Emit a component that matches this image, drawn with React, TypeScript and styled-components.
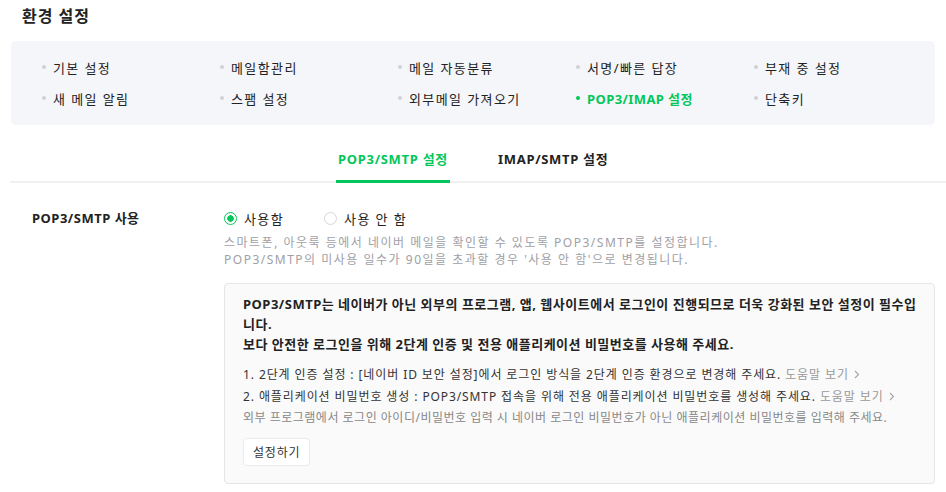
import React from "react";
import styled, { createGlobalStyle } from "styled-components";

const GlobalStyle = createGlobalStyle`
  html, body {
    margin: 0;
    padding: 0;
    background: #fff;
  }
  body {
    font-family: "Noto Sans", "Noto Sans CJK KR", sans-serif;
    color: #222;
    -webkit-font-smoothing: antialiased;
  }
`;

const menus = [
  ["기본 설정", "메일함관리", "메일 자동분류", "서명/빠른 답장", "부재 중 설정"],
  ["새 메일 알림", "스팸 설정", "외부메일 가져오기", "POP3/IMAP 설정", "단축키"],
];

const Chevron = () => (
  <svg width="6" height="9" viewBox="0 0 6 9" fill="none">
    <path d="M1 1l3.5 3.5L1 8" stroke="#a5a5a5" strokeWidth="1.1" />
  </svg>
);

function App() {
  return (
    <Page>
      <GlobalStyle />
      <Title>환경 설정</Title>
      <MenuBox>
        {menus.flat().map((m) => (
          <MenuItem key={m} $active={m === "POP3/IMAP 설정"}>
            {m}
          </MenuItem>
        ))}
      </MenuBox>

      <Tabs>
        <Tab $active>POP3/SMTP 설정</Tab>
        <Tab>IMAP/SMTP 설정</Tab>
      </Tabs>

      <Row>
        <Label>POP3/SMTP 사용</Label>
        <Content>
          <Radios>
            <RadioLabel>
              <Radio $checked />
              사용함
            </RadioLabel>
            <RadioLabel>
              <Radio />
              사용 안 함
            </RadioLabel>
          </Radios>
          <Desc>
            스마트폰, 아웃룩 등에서 네이버 메일을 확인할 수 있도록 POP3/SMTP를 설정합니다.
            <br />
            POP3/SMTP의 미사용 일수가 90일을 초과할 경우 '사용 안 함'으로 변경됩니다.
          </Desc>
          <InfoBox>
            <InfoTitle>
              POP3/SMTP는 네이버가 아닌 외부의 프로그램, 앱, 웹사이트에서 로그인이 진행되므로 더욱 강화된 보안 설정이 필수입니다.
              <br />
              보다 안전한 로그인을 위해 2단계 인증 및 전용 애플리케이션 비밀번호를 사용해 주세요.
            </InfoTitle>
            <Steps>
              <Step>
                1. 2단계 인증 설정 : [네이버 ID 보안 설정]에서 로그인 방식을 2단계 인증 환경으로 변경해 주세요.
                <HelpLink>
                  도움말 보기 <Chevron />
                </HelpLink>
              </Step>
              <Step>
                2. 애플리케이션 비밀번호 생성 : POP3/SMTP 접속을 위해 전용 애플리케이션 비밀번호를 생성해 주세요.
                <HelpLink>
                  도움말 보기 <Chevron />
                </HelpLink>
              </Step>
              <StepNote>
                외부 프로그램에서 로그인 아이디/비밀번호 입력 시 네이버 로그인 비밀번호가 아닌 애플리케이션 비밀번호를 입력해 주세요.
              </StepNote>
            </Steps>
            <SetupButton>설정하기</SetupButton>
          </InfoBox>
        </Content>
      </Row>
    </Page>
  );
}

const Page = styled.div`
  width: 946px;
  padding: 0 11px;
  box-sizing: border-box;
`;

const Title = styled.h1`
  margin: 0;
  padding: 5px 0 0 11px;
  height: 36px;
  font-size: 16px;
  font-weight: 700;
  line-height: 22px;
  letter-spacing: 1px;
  color: #222;
`;

const MenuBox = styled.div`
  display: grid;
  grid-template-columns: repeat(5, 178px);
  row-gap: 9px;
  padding: 15px 0 16px 31px;
  background: #f5f6fa;
  border-radius: 5px;
  width: 924px;
  box-sizing: border-box;
`;

const MenuItem = styled.div<{ $active?: boolean }>`
  display: flex;
  align-items: center;
  height: 22px;
  font-size: 13px;
  color: ${(p) => (p.$active ? "#03c75a" : "#222")};
  font-weight: ${(p) => (p.$active ? 700 : 400)};
  letter-spacing: ${(p) => (p.$active ? "0.4px" : "1.4px")};

  &::before {
    content: "";
    width: 4px;
    height: 4px;
    border-radius: 50%;
    margin: 0 7px 0 0;
    background: ${(p) => (p.$active ? "#03c75a" : "#cfd1d6")};
  }
`;

const Tabs = styled.div`
  display: flex;
  gap: 46px;
  margin: 17px -11px 0 -1px;
  padding-left: 326px;
  border-bottom: 2px solid #f1f1f3;
`;

const Tab = styled.div<{ $active?: boolean }>`
  padding: 7px 2px 12px;
  font-size: 13px;
  font-weight: 700;
  letter-spacing: 0.7px;
  color: ${(p) => (p.$active ? "#03c75a" : "#222")};
  border-bottom: 3px solid ${(p) => (p.$active ? "#03c75a" : "transparent")};
  margin-bottom: -2px;
`;

const Row = styled.div`
  display: flex;
  padding: 25px 0 0 21px;
`;

const Label = styled.div`
  width: 192px;
  flex-shrink: 0;
  font-size: 13px;
  font-weight: 700;
  line-height: 20px;
  letter-spacing: 0.5px;
  color: #222;
`;

const Content = styled.div`
  flex: 1;
`;

const Radios = styled.div`
  display: flex;
  gap: 40px;
  height: 20px;
  align-items: center;
`;

const RadioLabel = styled.label`
  display: flex;
  align-items: center;
  gap: 7px;
  font-size: 13px;
  letter-spacing: 1.4px;
  color: #222;
`;

const Radio = styled.span<{ $checked?: boolean }>`
  width: 13px;
  height: 13px;
  border-radius: 50%;
  box-sizing: border-box;
  border: 1px solid ${(p) => (p.$checked ? "#03c75a" : "#d5d7de")};
  background: ${(p) =>
    p.$checked
      ? "radial-gradient(circle, #03c75a 0 3px, #fff 3.5px)"
      : "#fff"};
`;

const Desc = styled.p`
  margin: 6px 0 0;
  font-size: 12px;
  line-height: 17px;
  color: #a0a0a6;
  letter-spacing: 1.5px;
`;

const InfoBox = styled.div`
  margin-top: 15px;
  width: 711px;
  box-sizing: border-box;
  padding: 10px 14px 17px 18px;
  background: #fafafa;
  border: 1px solid #e6e6e8;
  border-radius: 4px;
`;

const InfoTitle = styled.p`
  margin: 0;
  font-size: 13px;
  font-weight: 700;
  line-height: 20px;
  color: #222;
  letter-spacing: 0.5px;
`;

const Steps = styled.div`
  margin-top: 10px;
  display: flex;
  flex-direction: column;
`;

const Step = styled.div`
  font-size: 12px;
  line-height: 22px;
  color: #333;
  letter-spacing: 0.9px;
`;

const HelpLink = styled.span`
  margin-left: 4px;
  color: #999;
  svg {
    margin-left: 1px;
  }
`;

const StepNote = styled.div`
  font-size: 12px;
  line-height: 20px;
  color: #888;
  letter-spacing: 0.5px;
`;

const SetupButton = styled.button`
  margin-top: 10px;
  height: 28px;
  padding: 0 9px;
  font-family: inherit;
  font-size: 12px;
  letter-spacing: 0.8px;
  color: #333;
  background: #fff;
  border: 1px solid #ebebed;
  border-radius: 4px;
`;

export default App;
